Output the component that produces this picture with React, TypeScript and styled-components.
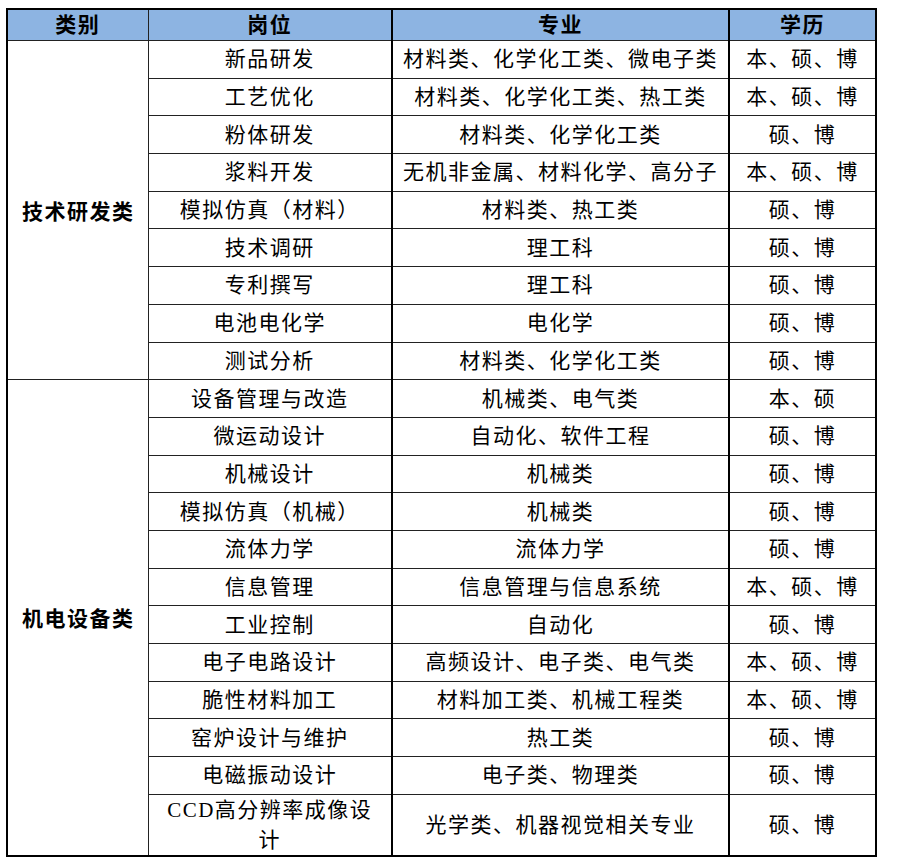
import React from "react";
import styled, { createGlobalStyle } from "styled-components";

const GlobalStyle = createGlobalStyle`
  html, body {
    margin: 0;
    padding: 0;
    background: #ffffff;
  }
  body {
    font-family: "Liberation Serif", "Noto Sans CJK SC", serif;
    color: #000000;
  }
`;

type Row = { job: string; major: string; degree: string; tall?: boolean };
type Group = { name: string; rows: Row[] };

const groups: Group[] = [
  {
    name: "技术研发类",
    rows: [
      { job: "新品研发", major: "材料类、化学化工类、微电子类", degree: "本、硕、博" },
      { job: "工艺优化", major: "材料类、化学化工类、热工类", degree: "本、硕、博" },
      { job: "粉体研发", major: "材料类、化学化工类", degree: "硕、博" },
      { job: "浆料开发", major: "无机非金属、材料化学、高分子", degree: "本、硕、博" },
      { job: "模拟仿真（材料）", major: "材料类、热工类", degree: "硕、博" },
      { job: "技术调研", major: "理工科", degree: "硕、博" },
      { job: "专利撰写", major: "理工科", degree: "硕、博" },
      { job: "电池电化学", major: "电化学", degree: "硕、博" },
      { job: "测试分析", major: "材料类、化学化工类", degree: "硕、博" },
    ],
  },
  {
    name: "机电设备类",
    rows: [
      { job: "设备管理与改造", major: "机械类、电气类", degree: "本、硕" },
      { job: "微运动设计", major: "自动化、软件工程", degree: "硕、博" },
      { job: "机械设计", major: "机械类", degree: "硕、博" },
      { job: "模拟仿真（机械）", major: "机械类", degree: "硕、博" },
      { job: "流体力学", major: "流体力学", degree: "硕、博" },
      { job: "信息管理", major: "信息管理与信息系统", degree: "本、硕、博" },
      { job: "工业控制", major: "自动化", degree: "硕、博" },
      { job: "电子电路设计", major: "高频设计、电子类、电气类", degree: "本、硕、博" },
      { job: "脆性材料加工", major: "材料加工类、机械工程类", degree: "本、硕、博" },
      { job: "窑炉设计与维护", major: "热工类", degree: "硕、博" },
      { job: "电磁振动设计", major: "电子类、物理类", degree: "硕、博" },
      { job: "CCD高分辨率成像设计", major: "光学类、机器视觉相关专业", degree: "硕、博", tall: true },
    ],
  },
];

const Page = styled.div`
  padding: 8px 0 0 6px;
`;

const Table = styled.table`
  border-collapse: collapse;
  table-layout: fixed;
  width: 869px;
  border: 2px solid #000;
  font-size: 21px;
  letter-spacing: 1.5px;
`;

const HeadCell = styled.th<{ $thick?: boolean }>`
  background: #8db4e2;
  font-weight: bold;
  height: 30px;
  padding: 0;
  text-align: center;
  vertical-align: middle;
  border-bottom: 1px solid #222;
  border-left: ${(p) => (p.$thick ? "2px solid #000" : "1px solid #222")};
  line-height: 1;
`;

const Cell = styled.td<{ $thick?: boolean; $tall?: boolean }>`
  height: ${(p) => (p.$tall ? "60px" : "36.7px")};
  padding: 0 8px;
  text-align: center;
  vertical-align: middle;
  border-top: 1px solid #222;
  border-left: ${(p) => (p.$thick ? "2px solid #000" : "1px solid #222")};
  line-height: 30px;
  white-space: ${(p) => (p.$tall ? "normal" : "nowrap")};
`;

const JobCell = styled(Cell)`
  padding: 0 10px;
`;

const CategoryCell = styled.td`
  padding: 0 0 0 14px;
  text-align: left;
  vertical-align: middle;
  font-weight: bold;
  border-top: 1px solid #222;
`;

export default function App() {
  return (
    <>
      <GlobalStyle />
      <Page>
        <Table>
          <colgroup>
            <col style={{ width: 141 }} />
            <col style={{ width: 244 }} />
            <col style={{ width: 337 }} />
            <col style={{ width: 147 }} />
          </colgroup>
          <thead>
            <tr>
              <HeadCell>类别</HeadCell>
              <HeadCell>岗位</HeadCell>
              <HeadCell $thick>专业</HeadCell>
              <HeadCell $thick>学历</HeadCell>
            </tr>
          </thead>
          <tbody>
            {groups.map((g) =>
              g.rows.map((r, i) => (
                <tr key={g.name + r.job}>
                  {i === 0 && <CategoryCell rowSpan={g.rows.length}>{g.name}</CategoryCell>}
                  <JobCell $tall={r.tall}>{r.job}</JobCell>
                  <Cell $thick $tall={r.tall}>{r.major}</Cell>
                  <Cell $thick $tall={r.tall}>{r.degree}</Cell>
                </tr>
              ))
            )}
          </tbody>
        </Table>
      </Page>
    </>
  );
}
